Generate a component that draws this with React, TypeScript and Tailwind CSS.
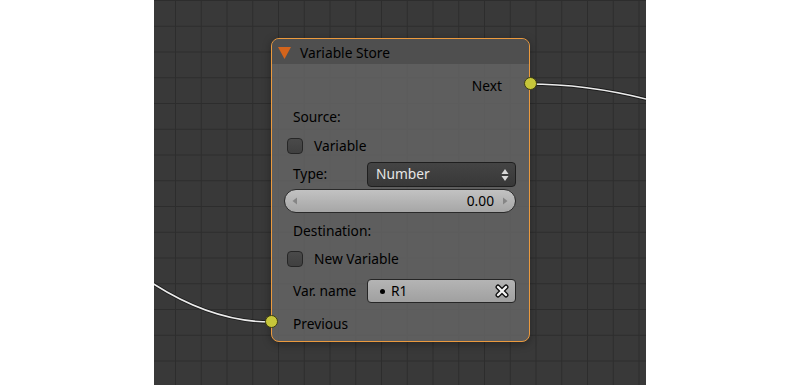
import React from 'react';

const font = { fontFamily: '"Noto Sans", "Open Sans", sans-serif' };

function Checkbox() {
  return (
    <span className="w-[16px] h-[16px] rounded-[4px] border border-[#262626] bg-[linear-gradient(to_bottom,#4a4a4a,#404040)] shrink-0" />
  );
}

function Socket({ className }: { className: string }) {
  return (
    <span className={`absolute w-[13px] h-[13px] rounded-full border border-[#3d3d10] bg-[#c6c63a] ${className}`} />
  );
}

export default function App() {
  return (
    <div className="w-[800px] h-[385px] flex bg-white overflow-hidden" style={font}>
      <div className="w-[154px] shrink-0" />

      {/* node editor canvas */}
      <div className="relative w-[492px] h-full overflow-hidden bg-[#393939] bg-[linear-gradient(to_right,#2d2d2d_1px,transparent_1px),linear-gradient(to_bottom,#2d2d2d_1px,transparent_1px)] [background-size:25.75px_25.75px] [background-position:21px_0px]">
        {/* links */}
        <svg className="absolute inset-0" width="492" height="385">
          <path d="M-2,283 Q58.5,322 117,322" fill="none" stroke="#1c1c1c" strokeWidth="3.4" />
          <path d="M-2,283 Q58.5,322 117,322" fill="none" stroke="#ececec" strokeWidth="1.6" />
          <path d="M374,84 Q433,84 494,99.5" fill="none" stroke="#1c1c1c" strokeWidth="3.4" />
          <path d="M374,84 Q433,84 494,99.5" fill="none" stroke="#ececec" strokeWidth="1.6" />
        </svg>

        {/* Variable Store node */}
        <div className="absolute left-[117px] top-[38px] w-[259px] h-[304px] rounded-[8px] border border-[#eb9a3e] bg-[rgba(100,100,100,0.86)] shadow-[0_2px_8px_rgba(0,0,0,0.35)] text-[13.75px] text-black">
          <div className="h-[25px] rounded-t-[7px] bg-[rgba(78,78,78,0.9)] flex items-center pl-[6px] gap-[9px]">
            <svg width="13" height="12" viewBox="0 0 13 12" className="mt-[2px] shrink-0">
              <path d="M0,0 L13,0 L6.5,12 Z" fill="#d3641c" />
            </svg>
            <span className="leading-none pt-[2px]">Variable Store</span>
          </div>

          <div className="flex flex-col">
            <div className="mt-[10px] h-[24px] flex items-center justify-end pr-[27px]">Next</div>
            <div className="mt-[7px] h-[24px] flex items-center pl-[21px]">Source:</div>
            <div className="mt-[5px] h-[24px] flex items-center pl-[15px] gap-[11px]">
              <Checkbox />
              <span>Variable</span>
            </div>
            <div className="mt-[4px] h-[25px] flex items-center pl-[21px] pr-[13px]">
              <span className="w-[74px]">Type:</span>
              <div className="flex-1 h-[25px] rounded-[4px] border border-[#1f1f1f] bg-[linear-gradient(to_bottom,#444444,#383838)] flex items-center pl-[8px] pr-[6px] text-[#e6e6e6]">
                <span className="flex-1">Number</span>
                <svg width="8" height="14" viewBox="0 0 8 14" className="shrink-0">
                  <path d="M4,1 L7.5,6 L0.5,6 Z" fill="#d8d8d8" />
                  <path d="M4,13 L7.5,8 L0.5,8 Z" fill="#d8d8d8" />
                </svg>
              </div>
            </div>
            <div className="mt-[2px] h-[24px] ml-[12px] mr-[13px] rounded-full border border-[#2a2a2a] bg-[linear-gradient(to_bottom,#c2c2c2,#a6a6a6)] flex items-center px-[7px]">
              <svg width="6" height="8" viewBox="0 0 6 8" className="shrink-0">
                <path d="M5,0.5 L5,7.5 L0.5,4 Z" fill="#858585" />
              </svg>
              <span className="flex-1 text-right pr-[8px]">0.00</span>
              <svg width="6" height="8" viewBox="0 0 6 8" className="shrink-0">
                <path d="M1,0.5 L1,7.5 L5.5,4 Z" fill="#858585" />
              </svg>
            </div>
            <div className="mt-[6px] h-[24px] flex items-center pl-[21px]">Destination:</div>
            <div className="mt-[4px] h-[24px] flex items-center pl-[15px] gap-[11px]">
              <Checkbox />
              <span>New Variable</span>
            </div>
            <div className="mt-[8px] h-[24px] flex items-center pl-[21px] pr-[13px]">
              <span className="w-[74px]">Var. name</span>
              <div className="flex-1 h-[24px] rounded-[4px] border border-[#262626] bg-[linear-gradient(to_bottom,#b4b4b4,#a0a0a0)] flex items-center pl-[12px] pr-[6px]">
                <span className="w-[5px] h-[5px] rounded-full bg-black mr-[6px] shrink-0" />
                <span className="flex-1">R1</span>
                <svg width="14" height="14" viewBox="0 0 14 14" className="shrink-0">
                  <path d="M3,3 L11,11 M11,3 L3,11" stroke="#111" strokeWidth="5" strokeLinecap="round" />
                  <path d="M3,3 L11,11 M11,3 L3,11" stroke="#f4f4f4" strokeWidth="2.4" strokeLinecap="round" />
                </svg>
              </div>
            </div>
            <div className="mt-[9px] h-[24px] flex items-center pl-[21px]">Previous</div>
          </div>

          <Socket className="right-[-7.5px] top-[38px]" />
          <Socket className="left-[-7.5px] top-[276px]" />
        </div>
      </div>

      <div className="flex-1" />
    </div>
  );
}
